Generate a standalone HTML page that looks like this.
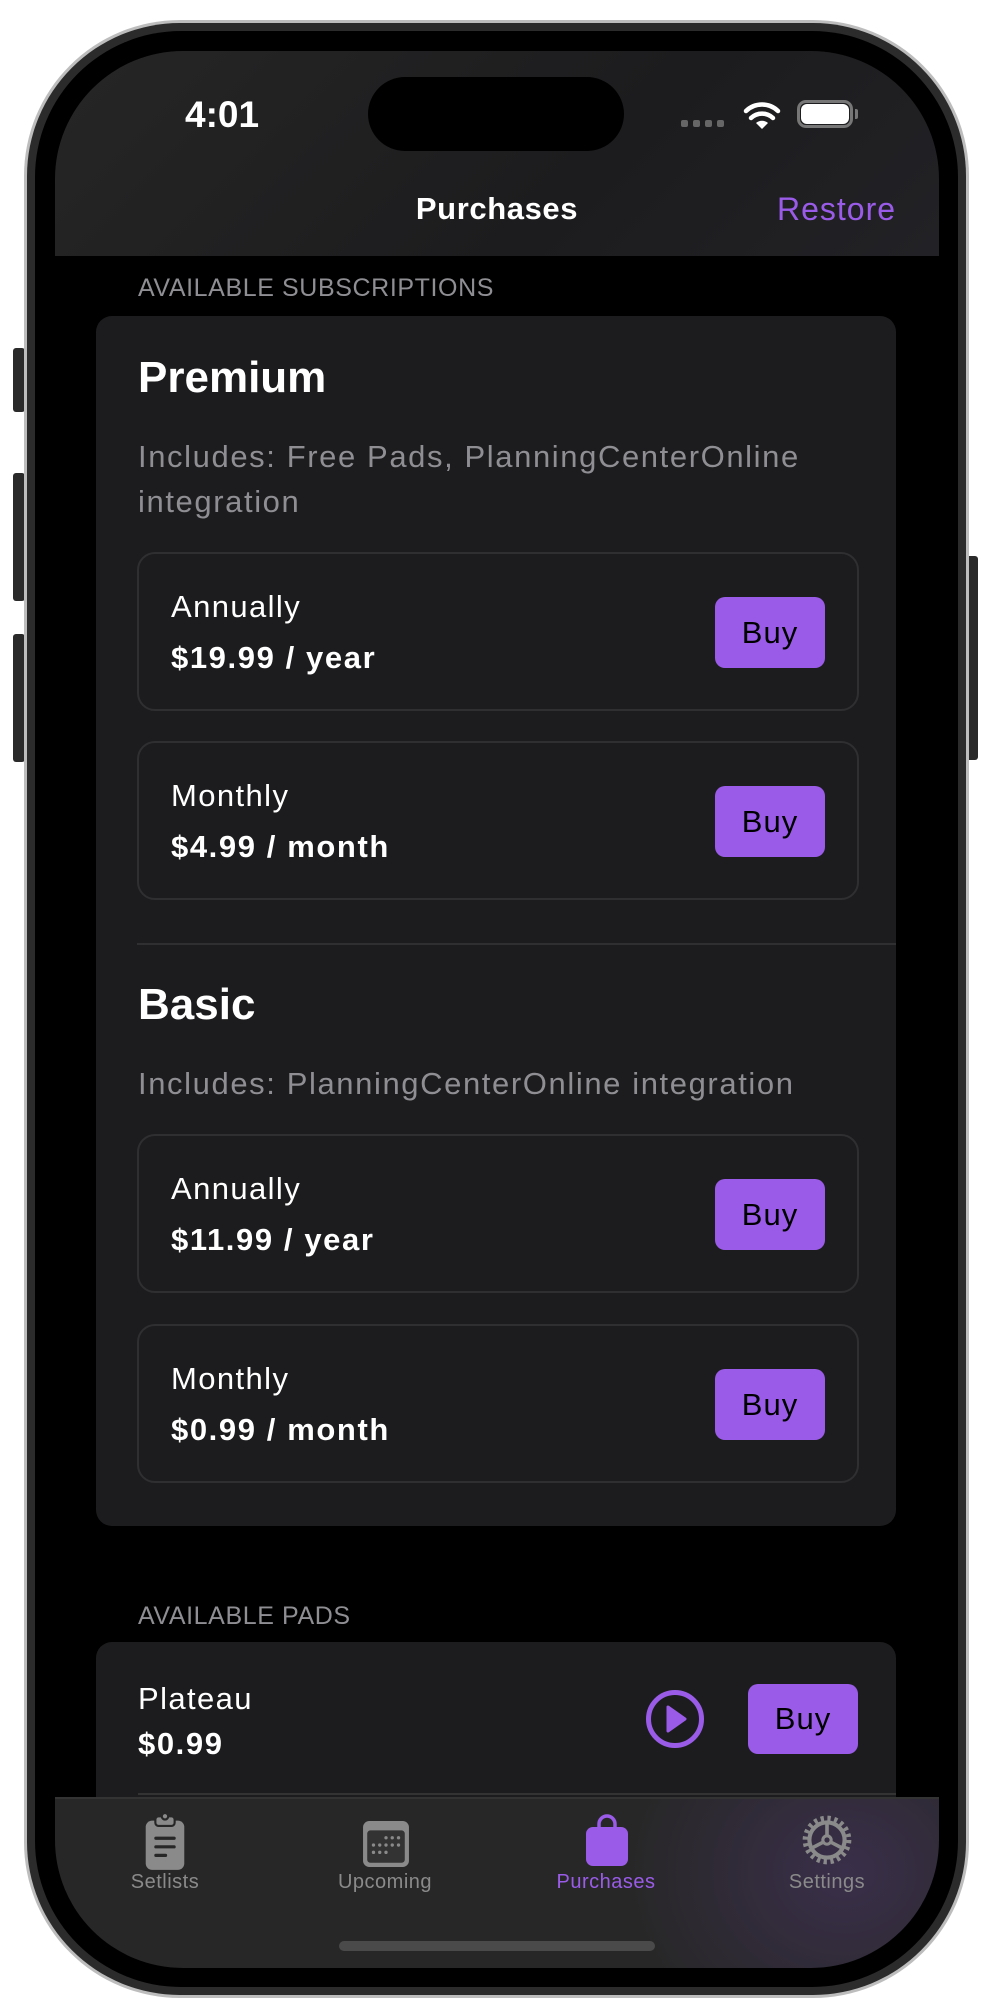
<!DOCTYPE html>
<html><head><meta charset="utf-8"><style>
*{margin:0;padding:0;box-sizing:border-box}
body{width:997px;height:2011px;background:#fff;position:relative;overflow:hidden;font-family:"Liberation Sans",sans-serif}
.a{position:absolute}
.t{position:absolute;white-space:nowrap;line-height:1}
.box{position:absolute;left:137px;width:722px;height:159px;border:2px solid #2f2f32;border-radius:18px}
.buy{position:absolute;background:#9a5ce8;border-radius:10px;color:#000;font-size:31px;letter-spacing:1px;display:flex;align-items:center;justify-content:center}
.lab{color:#fff;font-size:31px;letter-spacing:1.4px}
.pr{color:#fff;font-size:31px;font-weight:bold;letter-spacing:1.6px}
</style></head><body>
<div class="a" style="left:13px;top:348px;width:12px;height:64px;background:#2a2a2a;border-radius:3px"></div>
<div class="a" style="left:13px;top:473px;width:12px;height:128px;background:#2a2a2a;border-radius:3px"></div>
<div class="a" style="left:13px;top:634px;width:12px;height:128px;background:#2a2a2a;border-radius:3px"></div>
<div class="a" style="left:966px;top:556px;width:12px;height:204px;background:#2a2a2a;border-radius:3px"></div>
<div class="a" style="left:24px;top:20px;width:945px;height:1978px;border-radius:156px;background:#bdbdbd"></div>
<div class="a" style="left:27px;top:23px;width:939px;height:1972px;border-radius:153px;background:#2b2b2b"></div>
<div class="a" style="left:35px;top:31px;width:923px;height:1956px;border-radius:146px;background:#000"></div>
<div class="a" style="left:55px;top:51px;width:884px;height:1917px;border-radius:128px;background:#000;overflow:hidden">
  <div class="a" style="left:0;top:0;width:884px;height:205px;background:linear-gradient(135deg,#262626,#1c1c1e 60%,#222226)"></div>
  <div class="t" style="left:130px;top:45px;color:#fff;font-size:37px;font-weight:bold">4:01</div>
  <div class="a" style="left:313px;top:26px;width:256px;height:74px;border-radius:37px;background:#000"></div>
  <div class="a" style="left:626px;top:69px;width:7px;height:7px;border-radius:2px;background:#666"></div>
  <div class="a" style="left:638px;top:69px;width:7px;height:7px;border-radius:2px;background:#666"></div>
  <div class="a" style="left:650px;top:69px;width:7px;height:7px;border-radius:2px;background:#666"></div>
  <div class="a" style="left:662px;top:69px;width:7px;height:7px;border-radius:2px;background:#666"></div>
  <svg class="a" style="left:688px;top:49px" width="38" height="30" viewBox="0 0 38 30"><path d="M19 29 L13 23 A9 9 0 0 1 25 23 Z" fill="#fff"/><path d="M8 18 A16 16 0 0 1 30 18" stroke="#fff" stroke-width="4.5" fill="none" stroke-linecap="round"/><path d="M3 11 A23 23 0 0 1 35 11" stroke="#fff" stroke-width="4.5" fill="none" stroke-linecap="round"/></svg>
  <div class="a" style="left:742px;top:49px;width:56px;height:28px;border:3px solid #777;border-radius:9px"></div>
  <div class="a" style="left:746px;top:53px;width:48px;height:20px;background:#fff;border-radius:6px"></div>
  <div class="a" style="left:800px;top:58px;width:3px;height:10px;background:#777;border-radius:0 2px 2px 0"></div>
  <div class="t" style="left:0;width:884px;text-align:center;top:142px;color:#fff;font-size:31px;font-weight:bold;letter-spacing:0.6px">Purchases</div>
  <div class="t" style="left:722px;top:142px;color:#9a5ce8;font-size:32px;letter-spacing:1px">Restore</div>
</div>
<div class="t" style="left:138px;top:276px;color:#8e8e93;font-size:25px;letter-spacing:0.6px">AVAILABLE SUBSCRIPTIONS</div>
<div class="a" style="left:96px;top:316px;width:800px;height:1210px;background:#1c1c1e;border-radius:16px"></div>
<div class="t" style="left:138px;top:356px;color:#fff;font-size:44px;font-weight:bold">Premium</div>
<div class="t" style="left:138px;top:434px;color:#8e8e93;font-size:31px;line-height:45px;letter-spacing:1.6px">Includes: Free Pads, PlanningCenterOnline<br>integration</div>
<div class="box" style="top:552px"></div>
<div class="t lab" style="left:171px;top:591px">Annually</div>
<div class="t pr" style="left:171px;top:642px">$19.99 / year</div>
<div class="buy" style="left:715px;top:597px;width:110px;height:71px">Buy</div>
<div class="box" style="top:741px"></div>
<div class="t lab" style="left:171px;top:780px">Monthly</div>
<div class="t pr" style="left:171px;top:831px">$4.99 / month</div>
<div class="buy" style="left:715px;top:786px;width:110px;height:71px">Buy</div>
<div class="a" style="left:137px;top:943px;width:759px;height:2px;background:#2f2f32"></div>
<div class="t" style="left:138px;top:983px;color:#fff;font-size:44px;font-weight:bold">Basic</div>
<div class="t" style="left:138px;top:1068px;color:#8e8e93;font-size:31px;letter-spacing:1.6px">Includes: PlanningCenterOnline integration</div>
<div class="box" style="top:1134px"></div>
<div class="t lab" style="left:171px;top:1173px">Annually</div>
<div class="t pr" style="left:171px;top:1224px">$11.99 / year</div>
<div class="buy" style="left:715px;top:1179px;width:110px;height:71px">Buy</div>
<div class="box" style="top:1324px"></div>
<div class="t lab" style="left:171px;top:1363px">Monthly</div>
<div class="t pr" style="left:171px;top:1414px">$0.99 / month</div>
<div class="buy" style="left:715px;top:1369px;width:110px;height:71px">Buy</div>
<div class="t" style="left:138px;top:1604px;color:#8e8e93;font-size:25px;letter-spacing:0.6px">AVAILABLE PADS</div>
<div class="a" style="left:96px;top:1642px;width:800px;height:180px;background:#1c1c1e;border-radius:16px 16px 0 0"></div>
<div class="t lab" style="left:138px;top:1683px">Plateau</div>
<div class="t pr" style="left:138px;top:1728px">$0.99</div>
<svg class="a" style="left:644px;top:1688px" width="62" height="62" viewBox="0 0 62 62"><circle cx="31" cy="31" r="26.5" stroke="#9a5ce8" stroke-width="5" fill="none"/><path d="M24 19 L41 31 L24 43 Z" fill="#9a5ce8" stroke="#9a5ce8" stroke-width="3" stroke-linejoin="round"/></svg>
<div class="buy" style="left:748px;top:1684px;width:110px;height:70px">Buy</div>
<div class="a" style="left:138px;top:1793px;width:758px;height:2px;background:#333"></div>
<div class="a" style="left:55px;top:1797px;width:884px;height:171px;border-radius:0 0 128px 128px;background:radial-gradient(ellipse 220px 190px at 790px 75px,#3a2f4a,rgba(40,40,40,0) 100%),#272727;overflow:hidden">
  <div class="a" style="left:0;top:0;width:884px;height:2px;background:#333"></div>
</div>
<svg class="a" style="left:143px;top:1812px" width="44" height="60" viewBox="0 0 40 56"><rect x="2" y="8" width="36" height="46" rx="6" fill="#8a8a8a"/><rect x="11" y="4" width="18" height="9" rx="3" fill="#8a8a8a" stroke="#272727" stroke-width="2"/><circle cx="20" cy="4" r="3" fill="#8a8a8a" stroke="#272727" stroke-width="2"/><rect x="10" y="23" width="20" height="3" rx="1.5" fill="#272727"/><rect x="10" y="31" width="20" height="3" rx="1.5" fill="#272727"/><rect x="10" y="39" width="12" height="3" rx="1.5" fill="#272727"/></svg>
<svg class="a" style="left:362px;top:1820px" width="48" height="48" viewBox="0 0 46 46"><rect x="1" y="1" width="44" height="44" rx="6" fill="#8a8a8a"/><rect x="5" y="10" width="36" height="31" rx="3" fill="#333"/><g fill="#8a8a8a"><circle cx="23" cy="17" r="1.6"/><circle cx="29" cy="17" r="1.6"/><circle cx="35" cy="17" r="1.6"/><circle cx="11" cy="24" r="1.6"/><circle cx="17" cy="24" r="1.6"/><circle cx="23" cy="24" r="1.6"/><circle cx="29" cy="24" r="1.6"/><circle cx="35" cy="24" r="1.6"/><circle cx="11" cy="31" r="1.6"/><circle cx="17" cy="31" r="1.6"/><circle cx="23" cy="31" r="1.6"/></g></svg>
<svg class="a" style="left:585px;top:1814px" width="44" height="54" viewBox="0 0 44 52"><path d="M14 14 V9 A8 8 0 0 1 30 9 V14" stroke="#9a5ce8" stroke-width="3.5" fill="none"/><rect x="1" y="12" width="42" height="39" rx="7" fill="#9a5ce8"/></svg>
<svg class="a" style="left:799px;top:1811px" width="56" height="58" viewBox="0 0 54 56"><g fill="none" stroke="#8a8a8a"><circle cx="27" cy="28" r="20" stroke-width="7" stroke-dasharray="3 3.3"/><circle cx="27" cy="28" r="17" stroke-width="4"/><circle cx="27" cy="28" r="4" stroke-width="3"/><path d="M27 24 V11 M30.5 30 L42 36 M23.5 30 L12 36" stroke-width="3.5"/></g></svg>
<div class="t" style="left:100px;width:130px;text-align:center;top:1872px;color:#8a8a8a;font-size:20px;letter-spacing:0.5px">Setlists</div>
<div class="t" style="left:320px;width:130px;text-align:center;top:1872px;color:#8a8a8a;font-size:20px;letter-spacing:0.5px">Upcoming</div>
<div class="t" style="left:531px;width:150px;text-align:center;top:1872px;color:#9a5ce8;font-size:20px;letter-spacing:0.5px">Purchases</div>
<div class="t" style="left:762px;width:130px;text-align:center;top:1872px;color:#8a8a8a;font-size:20px;letter-spacing:0.5px">Settings</div>
<div class="a" style="left:339px;top:1941px;width:316px;height:10px;border-radius:5px;background:#4a4a4a"></div>
</body></html>
